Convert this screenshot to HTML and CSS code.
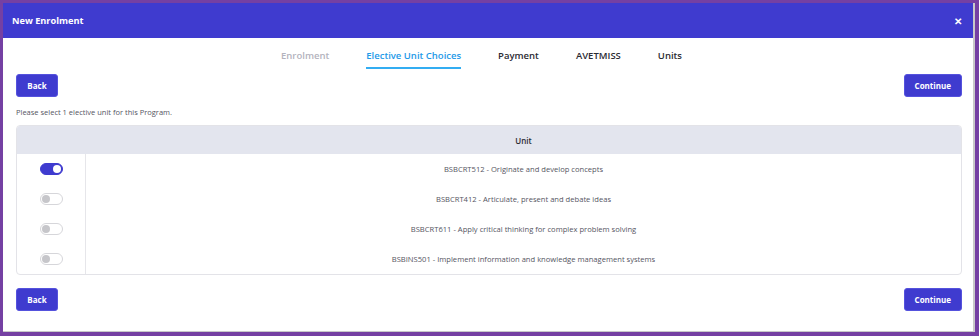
FILE: index.html
```html
<!DOCTYPE html>
<html lang="en">
<head>
  <meta charset="UTF-8" />
  <title>New Enrolment</title>
  <link rel="stylesheet" href="styles.css">
</head>
<body>
  <div class="frame">
    <div class="modal">
      <div class="modal-header">
        <span class="modal-title">New Enrolment</span>
        <span class="close">&#x2715;</span>
      </div>

      <div class="modal-body">
        <div class="tabs">
          <span class="tab done">Enrolment</span>
          <span class="tab active">Elective Unit Choices</span>
          <span class="tab">Payment</span>
          <span class="tab">AVETMISS</span>
          <span class="tab">Units</span>
        </div>

        <div class="actions top">
          <button class="btn">Back</button>
          <button class="btn">Continue</button>
        </div>

        <p class="hint">Please select 1 elective unit for this Program.</p>

        <table class="units">
          <thead>
            <tr>
              <th class="col-toggle"></th>
              <th>Unit</th>
            </tr>
          </thead>
          <tbody>
            <tr>
              <td class="col-toggle"><span class="toggle on"></span></td>
              <td>BSBCRT512 - Originate and develop concepts</td>
            </tr>
            <tr>
              <td class="col-toggle"><span class="toggle"></span></td>
              <td>BSBCRT412 - Articulate, present and debate ideas</td>
            </tr>
            <tr>
              <td class="col-toggle"><span class="toggle"></span></td>
              <td>BSBCRT611 - Apply critical thinking for complex problem solving</td>
            </tr>
            <tr>
              <td class="col-toggle"><span class="toggle"></span></td>
              <td>BSBINS501 - Implement information and knowledge management systems</td>
            </tr>
          </tbody>
        </table>

        <div class="actions bottom">
          <button class="btn">Back</button>
          <button class="btn">Continue</button>
        </div>
      </div>
    </div>
  </div>
</body>
</html>
```

FILE: styles.css
```css
* {
  box-sizing: border-box;
}

html, body {
  margin: 0;
  height: 100%;
}

body {
  font-family: "Open Sans", "Liberation Sans", sans-serif;
  background: #6e3a9a;
}

.frame {
  height: 336px;
  padding: 3px 4px 4px 3px;
  background: #7540a3;
}

.modal {
  height: 100%;
  background: #ffffff;
  border-right: 2px solid #c9c9c9;
  border-bottom: 1px solid #c9c9c9;
  display: flex;
  flex-direction: column;
}

.modal-header {
  height: 35px;
  background: #3f3bcf;
  color: #ffffff;
  display: flex;
  align-items: center;
  justify-content: space-between;
  padding: 0 11px 0 9px;
}

.modal-title {
  font-size: 9.2px;
  font-weight: 700;
}

.close {
  font-size: 10px;
  font-weight: 700;
}

.modal-body {
  padding: 0 11px 0 13px;
}

.tabs {
  display: flex;
  justify-content: center;
  gap: 37px;
  padding-top: 11px;
  margin-right: 15px;
}

.tab {
  font-size: 9.5px;
  font-weight: 600;
  color: #2b2b33;
  padding-bottom: 5px;
  border-bottom: 2px solid transparent;
}

.tab.done {
  color: #b3b3bd;
}

.tab.active {
  color: #1e9ae8;
  border-bottom-color: #33adf2;
}

.actions {
  display: flex;
  justify-content: space-between;
}

.actions.top {
  margin-top: 5px;
}

.actions.bottom {
  margin-top: 13px;
}

.btn {
  height: 23px;
  padding: 0 10px;
  font-family: inherit;
  font-size: 8px;
  font-weight: 700;
  color: #ffffff;
  background: #3f3bcf;
  border: 1px solid #5552dd;
  border-radius: 3px;
}

.btn:first-child {
  width: 42px;
  padding: 0;
}

.hint {
  margin: 10px 0 8px;
  font-size: 7.5px;
  color: #55555f;
}

.units {
  width: 100%;
  border-collapse: separate;
  border-spacing: 0;
  border: 1px solid #e3e3e8;
  border-radius: 4px;
  overflow: hidden;
}

.units th {
  height: 28px;
  background: #e3e5ee;
  font-size: 8px;
  font-weight: 600;
  color: #2b2b33;
}

.units td {
  height: 30px;
  text-align: center;
  font-size: 7.6px;
  color: #55555f;
}

.units .col-toggle {
  width: 69px;
}

.units td.col-toggle {
  border-right: 1px solid #e6e6ea;
}

.toggle {
  display: inline-block;
  position: relative;
  width: 23px;
  height: 12px;
  border-radius: 6px;
  border: 1px solid #d6d6da;
  background: #ffffff;
  vertical-align: middle;
}

.toggle::after {
  content: "";
  position: absolute;
  top: 1px;
  left: 1px;
  width: 8px;
  height: 8px;
  border-radius: 50%;
  background: #c6c6ca;
}

.toggle.on {
  background: #3f3bcf;
  border-color: #3f3bcf;
}

.toggle.on::after {
  left: auto;
  right: 1px;
  background: #ffffff;
}
```
